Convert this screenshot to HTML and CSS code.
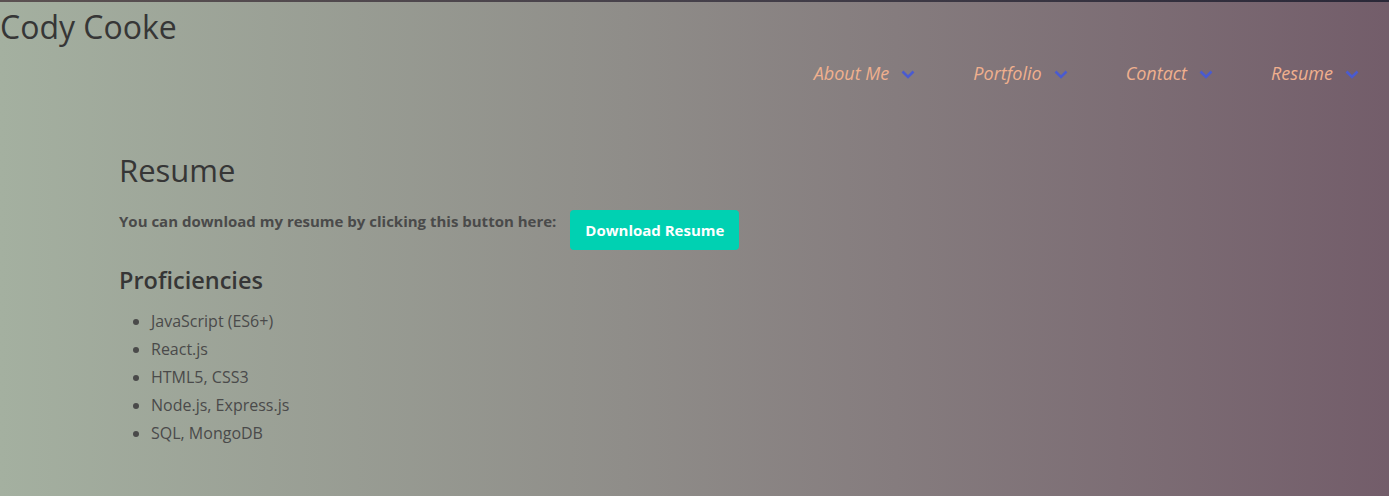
FILE: index.html
```html
<!DOCTYPE html>
<html lang="en">
<head>
<meta charset="utf-8">
<title>Cody Cooke</title>
<link rel="stylesheet" href="styles.css">
</head>
<body>
<div class="topline"></div>
<header class="header">
  <h1 class="brand">Cody Cooke</h1>
  <nav class="nav">
    <a class="nav-item" href="#">About Me <svg class="chev" width="14" height="9" viewBox="0 0 14 9"><path d="M1.5 1.5 L7 7 L12.5 1.5" fill="none" stroke="#4a5bd0" stroke-width="2.6"/></svg></a>
    <a class="nav-item" href="#">Portfolio <svg class="chev" width="14" height="9" viewBox="0 0 14 9"><path d="M1.5 1.5 L7 7 L12.5 1.5" fill="none" stroke="#4a5bd0" stroke-width="2.6"/></svg></a>
    <a class="nav-item" href="#">Contact <svg class="chev" width="14" height="9" viewBox="0 0 14 9"><path d="M1.5 1.5 L7 7 L12.5 1.5" fill="none" stroke="#4a5bd0" stroke-width="2.6"/></svg></a>
    <a class="nav-item" href="#">Resume <svg class="chev" width="14" height="9" viewBox="0 0 14 9"><path d="M1.5 1.5 L7 7 L12.5 1.5" fill="none" stroke="#4a5bd0" stroke-width="2.6"/></svg></a>
  </nav>
</header>
<main class="content">
  <h2 class="title">Resume</h2>
  <div class="download-row">
    <p class="download-text">You can download my resume by clicking this button here:</p>
    <a class="button" href="#">Download Resume</a>
  </div>
  <h3 class="subtitle">Proficiencies</h3>
  <ul class="skills">
    <li>JavaScript (ES6+)</li>
    <li>React.js</li>
    <li>HTML5, CSS3</li>
    <li>Node.js, Express.js</li>
    <li>SQL, MongoDB</li>
  </ul>
</main>
</body>
</html>
```

FILE: styles.css
```css
html, body {
  margin: 0;
  padding: 0;
}
body {
  min-height: 496px;
  background: linear-gradient(to right, #a4b0a0 0%, #8f8d89 45%, #735d6a 100%);
  font-family: "Open Sans", "DejaVu Sans", sans-serif;
  color: #4a4a4a;
}
.topline {
  height: 2px;
  background: linear-gradient(to right, #5b5151, #45404a 50%, #2a2838);
}
.header {
  display: flex;
  flex-direction: column;
}
.brand {
  margin: 0;
  font-size: 32px;
  font-weight: 400;
  line-height: 52px;
  color: #363636;
  height: 40px;
  margin-top: -1px;
}
.nav {
  display: flex;
  justify-content: flex-end;
  gap: 58px;
  padding-right: 30px;
  margin-top: 20px;
}
.nav-item {
  display: flex;
  align-items: center;
  gap: 12px;
  font-style: italic;
  font-size: 18px;
  color: #f0b08e;
  text-decoration: none;
  line-height: 24px;
}
.chev {
  display: block;
  margin-top: 2px;
}
.content {
  padding-left: 119px;
  padding-top: 65px;
}
.title {
  margin: 0;
  font-size: 31px;
  font-weight: 400;
  color: #363636;
  line-height: 40px;
}
.download-row {
  display: flex;
  align-items: center;
  gap: 14px;
  margin-top: 20px;
}
.download-text {
  margin: 0;
  font-size: 15px;
  font-weight: 700;
  color: #4a4a4a;
  position: relative;
  top: -9px;
}
.button {
  display: flex;
  align-items: center;
  justify-content: center;
  width: 169px;
  height: 40px;
  background: #00d1b2;
  color: #fff;
  border-radius: 4px;
  font-weight: 700;
  font-size: 15px;
  text-decoration: none;
}
.subtitle {
  margin: 14px 0 0;
  font-size: 23.5px;
  font-weight: 600;
  color: #363636;
  line-height: 32px;
}
.skills {
  margin: 11px 0 0;
  padding-left: 32px;
  font-size: 16px;
  line-height: 28px;
  color: #4a4a4a;
}
```
